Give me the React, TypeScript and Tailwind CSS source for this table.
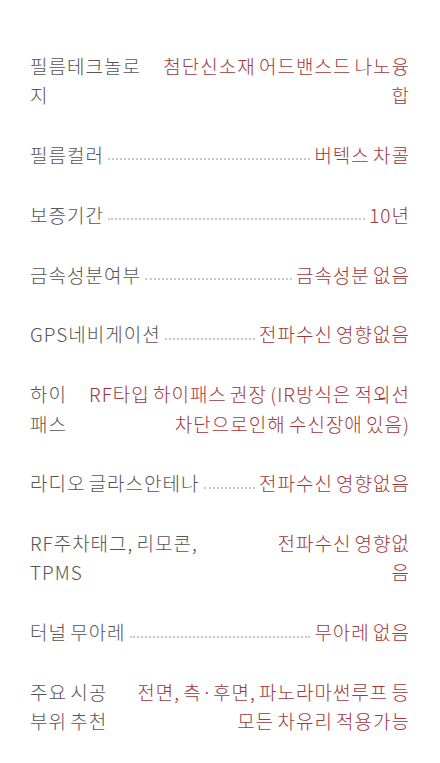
import React from 'react';

interface SpecRow {
  label: string;
  value: string;
  // fixed widths only for rows whose text wraps
  labelClass?: string;
  valueClass?: string;
}

const rows: SpecRow[] = [
  { label: '필름테크놀로지', value: '첨단신소재 어드밴스드 나노융합', labelClass: 'w-[114px]', valueClass: 'w-[256px] ml-auto' },
  { label: '필름컬러', value: '버텍스 차콜' },
  { label: '보증기간', value: '10년' },
  { label: '금속성분여부', value: '금속성분 없음' },
  { label: 'GPS네비게이션', value: '전파수신 영향없음' },
  { label: '하이패스', value: 'RF타입 하이패스 권장 (IR방식은 적외선 차단으로인해 수신장애 있음)', labelClass: 'w-[40px]', valueClass: 'w-[336px] ml-auto' },
  { label: '라디오 글라스안테나', value: '전파수신 영향없음' },
  { label: 'RF주차태그, 리모콘, TPMS', value: '전파수신 영향없음', labelClass: 'w-[175px]', valueClass: 'w-[142px] ml-auto' },
  { label: '터널 무아레', value: '무아레 없음' },
  { label: '주요 시공 부위 추천', value: '전면, 측·후면, 파노라마썬루프 등 모든 차유리 적용가능', labelClass: 'w-[86px]', valueClass: 'w-[286px] ml-auto' },
];

export default function App() {
  return (
    <div
      className="min-h-[763px] w-[440px] bg-white px-[30px] pt-[51px]"
      style={{ fontFamily: '"Noto Sans CJK KR", "Noto Sans", sans-serif' }}
    >
      <dl className="flex flex-col gap-[30.5px] text-[19px] leading-[29.3px] tracking-[1px] [word-spacing:-2px] font-light">
        {rows.map((row) => {
          const wraps = Boolean(row.labelClass);
          return (
            <div key={row.label} className="flex items-start">
              <dt className={`shrink-0 text-[#555555] ${row.labelClass ?? ''}`}>{row.label}</dt>
              {!wraps && (
                <span className="mx-[4px] mb-[9px] flex-1 self-end border-b-2 border-dotted border-[#c8c8c8]" />
              )}
              <dd className={`text-right text-[#a0373c] ${row.valueClass ?? 'shrink-0'}`}>{row.value}</dd>
            </div>
          );
        })}
      </dl>
    </div>
  );
}
